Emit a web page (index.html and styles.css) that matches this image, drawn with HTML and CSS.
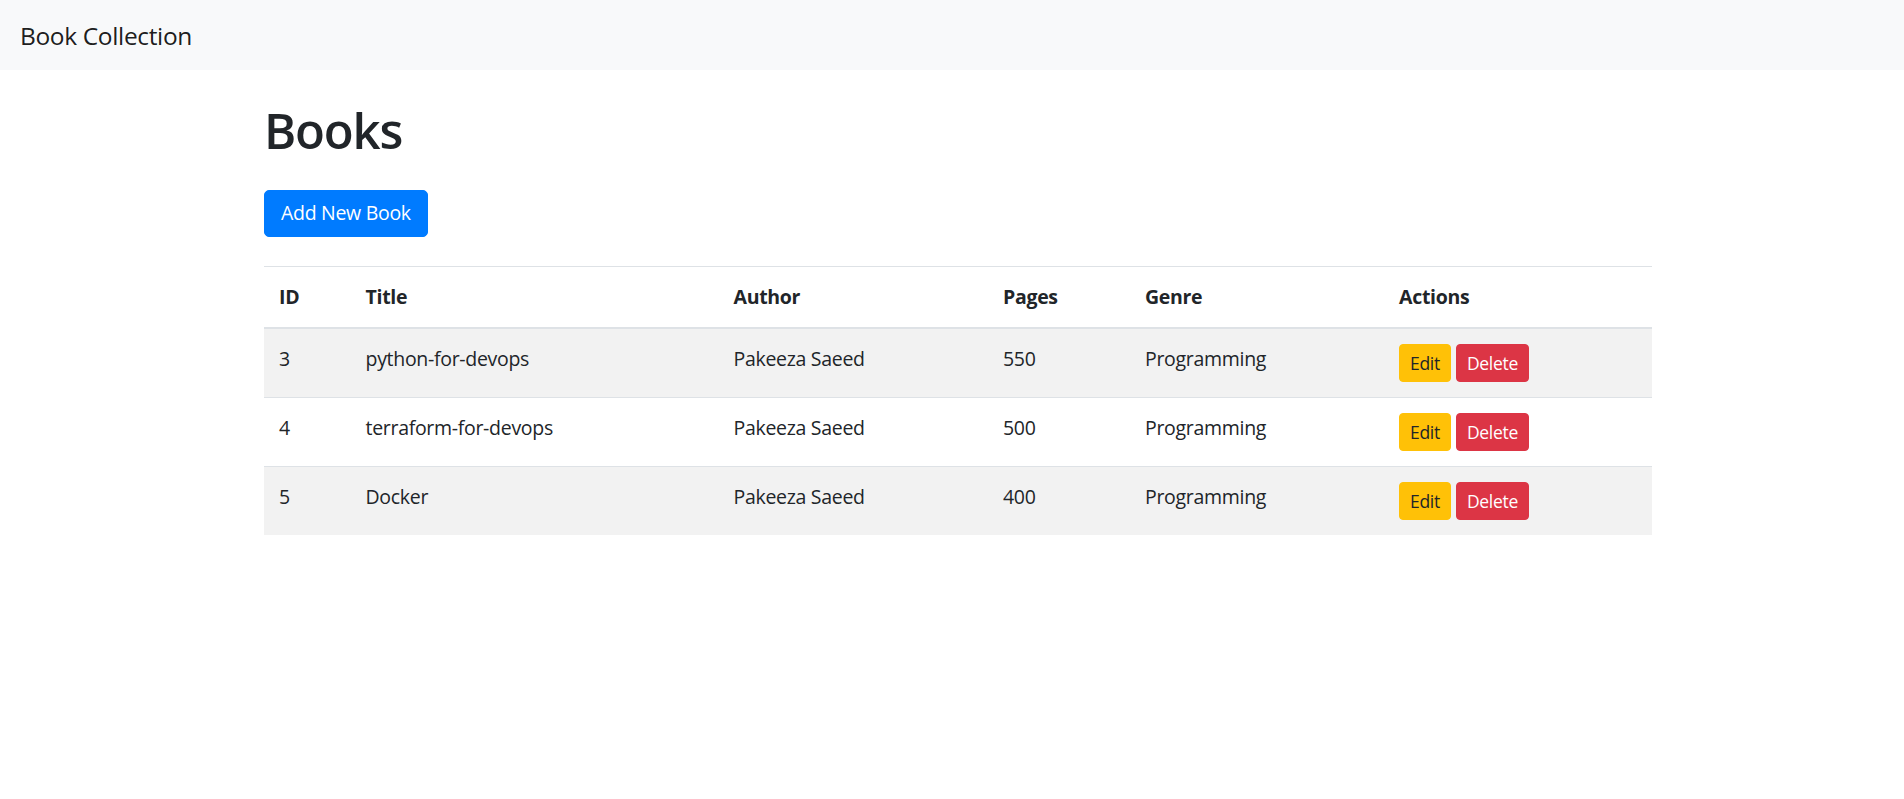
FILE: index.html
```html
<!DOCTYPE html>
<html lang="en">
<head>
<meta charset="utf-8">
<title>Book Collection</title>
<link rel="stylesheet" href="styles.css">
</head>
<body>
<nav class="navbar">
  <a class="brand" href="#">Book Collection</a>
</nav>
<main class="page">
  <div class="container">
    <h1 class="title">Books</h1>
    <a class="btn btn-primary" href="#">Add New Book</a>
    <table class="table">
      <colgroup>
        <col class="c-id"><col class="c-title"><col class="c-author"><col class="c-pages"><col class="c-genre"><col class="c-actions">
      </colgroup>
      <thead>
        <tr><th>ID</th><th>Title</th><th>Author</th><th>Pages</th><th>Genre</th><th>Actions</th></tr>
      </thead>
      <tbody>
        <tr class="odd"><td>3</td><td>python-for-devops</td><td>Pakeeza Saeed</td><td>550</td><td>Programming</td><td><div class="actions"><a class="btn-sm btn-warning" href="#">Edit</a><a class="btn-sm btn-danger" href="#">Delete</a></div></td></tr>
        <tr><td>4</td><td>terraform-for-devops</td><td>Pakeeza Saeed</td><td>500</td><td>Programming</td><td><div class="actions"><a class="btn-sm btn-warning" href="#">Edit</a><a class="btn-sm btn-danger" href="#">Delete</a></div></td></tr>
        <tr class="odd"><td>5</td><td>Docker</td><td>Pakeeza Saeed</td><td>400</td><td>Programming</td><td><div class="actions"><a class="btn-sm btn-warning" href="#">Edit</a><a class="btn-sm btn-danger" href="#">Delete</a></div></td></tr>
      </tbody>
    </table>
  </div>
</main>
</body>
</html>
```
FILE: styles.css
```css
* { box-sizing: border-box; }
html, body { margin: 0; }
body {
  font-family: "Open Sans", "Noto Sans", sans-serif;
  font-size: 19.5px;
  line-height: 30px;
  color: #212529;
  background: #fff;
}
a { text-decoration: none; }

.navbar {
  height: 70px;
  background: #f8f9fa;
  display: flex;
  align-items: center;
  padding: 0 20px;
}
.brand {
  font-size: 24.5px;
  line-height: 37px;
  color: rgba(0,0,0,.9);
  letter-spacing: -0.35px;
}

.page { padding-left: 12px; }
.container {
  width: 1388px;
  margin: 0 auto;
  padding-top: 30px;
}
.title {
  margin: 0 0 30px;
  font-size: 49px;
  line-height: 60px;
  font-weight: 600;
  letter-spacing: -1.2px;
}
.btn {
  display: inline-block;
  border: 1px solid transparent;
  border-radius: 5px;
  padding: 7px 16px 8px;
  font-size: 19.5px;
  line-height: 30px;
  letter-spacing: -0.3px;
}
.btn-primary { background: #007bff; border-color: #007bff; color: #fff; }

.table {
  width: 100%;
  margin-top: 29px;
  border-collapse: collapse;
  table-layout: fixed;
}
.c-id { width: 86.5px; }
.c-title { width: 368px; }
.c-author { width: 269.5px; }
.c-pages { width: 142px; }
.c-genre { width: 254px; }
.c-actions { width: 268px; }

.table th, .table td {
  padding: 15px;
  text-align: left;
  vertical-align: top;
  border-top: 1px solid #dee2e6;
  letter-spacing: -0.3px;
}
.table th { font-weight: 700; }
.table thead th { border-bottom: 2px solid #dee2e6; }
.table tbody tr:first-child td { border-top: 0; }
.table tbody tr.odd { background: #f2f2f2; }

.actions { display: flex; gap: 5px; }
.btn-sm {
  display: inline-block;
  border: 1px solid transparent;
  border-radius: 4px;
  padding: 5px 10px;
  font-size: 17.5px;
  line-height: 26px;
  letter-spacing: -0.3px;
}
.btn-warning { background: #ffc107; border-color: #ffc107; color: #212529; }
.btn-danger { background: #dc3545; border-color: #dc3545; color: #fff; }
```
